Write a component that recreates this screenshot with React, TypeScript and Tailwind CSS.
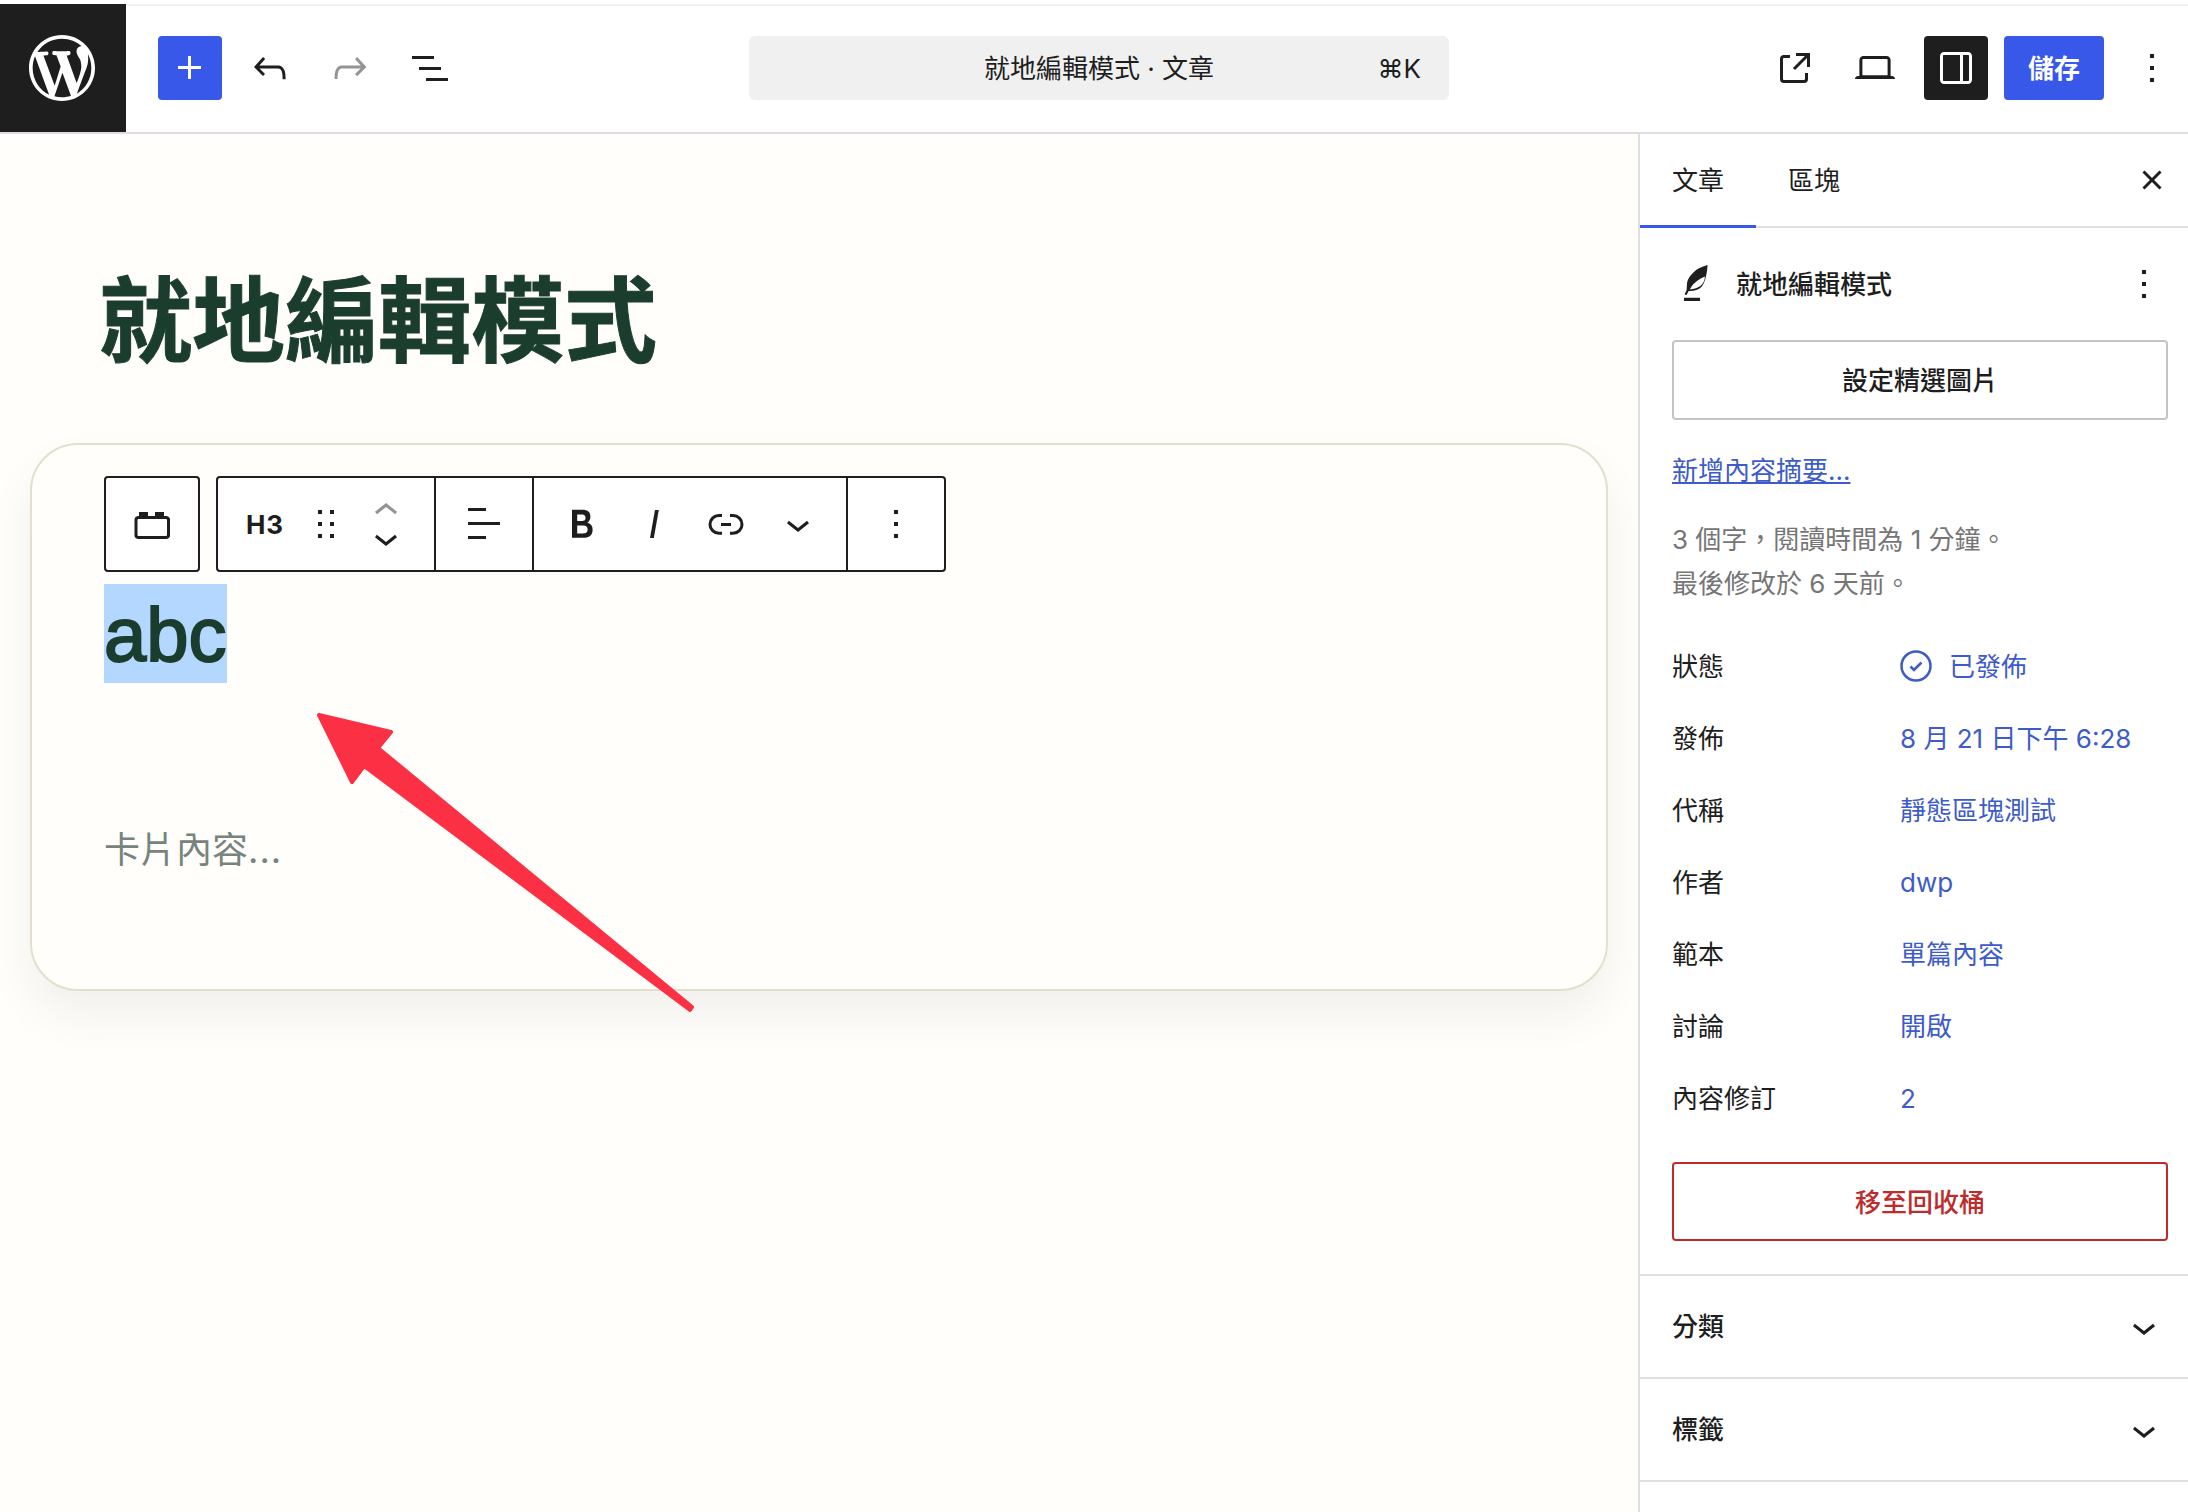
const fontStack = "font-['Inter','Noto_Sans_CJK_TC',sans-serif]";

const Icon = ({ d, size = 48, className = "" }: { d: string; size?: number; className?: string }) => (
  <svg width={size} height={size} viewBox="0 0 24 24" fill="currentColor" className={`shrink-0 ${className}`}>
    <path d={d} fillRule="evenodd" clipRule="evenodd" />
  </svg>
);

const paths = {
  plus: "M11 12.5V17.5H12.5V12.5H17.5V11H12.5V6H11V11H6V12.5H11Z",
  undo: "M18.3 11.7c-.6-.6-1.4-.9-2.3-.9H6.7l2.9-3.3-1.1-1-4.5 5L8.5 16l1-1-2.7-2.7H16c.5 0 .9.2 1.3.5 1 1 1 3.4 1 4.5v.3h1.5v-.2c0-1.5 0-4.3-1.5-5.7z",
  redo: "M15.6 6.5l-1.1 1 2.9 3.3H8c-.9 0-1.7.3-2.3.9-1.4 1.5-1.4 4.2-1.4 5.6v.2h1.5v-.3c0-1.1 0-3.5 1-4.5.3-.3.7-.5 1.3-.5h9.2L14.5 15l1.1 1.1 4.6-4.6-4.6-5z",
  listView: "M3 6h11v1.5H3V6Zm3.5 5.5h11V13h-11v-1.5ZM21 17H10v1.5h11V17Z",
  external: "M19.5 4.5h-7V6h4.44l-5.97 5.97 1.06 1.06L18 7.06v4.44h1.5v-7Zm-13 1a2 2 0 0 0-2 2v10a2 2 0 0 0 2 2h10a2 2 0 0 0 2-2v-3H17v3a.5.5 0 0 1-.5.5h-10a.5.5 0 0 1-.5-.5v-10a.5.5 0 0 1 .5-.5h3V5.5h-3Z",
  laptop: "M20.5 16h-.7V8c0-1.1-.9-2-2-2H6.2c-1.1 0-2 .9-2 2v8h-.7c-.8 0-1.5.7-1.5 1.5h20c0-.8-.7-1.5-1.5-1.5zM5.7 8c0-.3.2-.5.5-.5h11.6c.3 0 .5.2.5.5v7.600H5.700V8z",
  drawer: "M18 4H6c-1.1 0-2 .9-2 2v12c0 1.1.9 2 2 2h12c1.1 0 2-.9 2-2V6c0-1.1-.9-2-2-2zm-4 14.5H6c-.3 0-.5-.2-.5-.5V6c0-.3.2-.5.5-.5h8v13zm4.5-.5c0 .3-.2.5-.5.5h-2.5v-13H18c.3 0 .5.2.5.5v12z",
  more: "M13 19h-2v-2h2v2zm0-6h-2v-2h2v2zm0-6h-2V5h2v2z",
  close: "M12 13.06l3.712 3.713 1.061-1.06L13.061 12l3.712-3.712-1.06-1.06L12 10.938 8.288 7.227l-1.061 1.06L10.939 12l-3.712 3.712 1.06 1.061L12 13.061z",
  chevronDown: "M17.5 11.6L12 16l-5.5-4.4.9-1.2L12 14l4.5-3.6 1 1.2z",
  chevronUp: "M6.5 12.4L12 8l5.5 4.4-.9 1.2L12 10l-4.5 3.6-1-1.2z",
  drag: "M8 7h2V5H8v2zm0 6h2v-2H8v2zm0 6h2v-2H8v2zm6-14v2h2V5h-2zm0 8h2v-2h-2v2zm0 6h2v-2h-2v2z",
  align: "M13 5.5H4V4h9v1.5Zm7 7H4V11h16v1.5Zm-7 7H4V18h9v1.5Z",
  bold: "M14.7 11.3c1-.6 1.5-1.6 1.5-3 0-2.3-1.3-3.4-4-3.4H7v14h5.8c1.4 0 2.5-.3 3.3-1 .8-.7 1.2-1.7 1.2-2.9.1-1.9-.8-3.1-2.6-3.7zm-5.1-4h2.3c.6 0 1.1.1 1.4.4.3.3.5.7.5 1.2s-.2 1-.5 1.2c-.3.3-.8.4-1.4.4H9.6V7.3zm4.6 9c-.4.3-1 .4-1.7.4H9.6v-3.9h2.9c.7 0 1.3.2 1.7.5.4.3.6.8.6 1.5s-.2 1.2-.6 1.5z",
  italic: "M12.5 5L10 19h1.9l2.5-14z",
  link: "M10 17.389H8.444A5.194 5.194 0 1 1 8.444 7H10v1.5H8.444a3.694 3.694 0 0 0 0 7.389H10v1.5ZM14 7h1.556a5.194 5.194 0 0 1 0 10.39H14v-1.5h1.556a3.694 3.694 0 0 0 0-7.39H14V7Zm-4.5 6h5v-1.5h-5V13Z",
  card: "M5.500 8V6H10v2h3.500V6H18v2h1c1.100 0 2 .7 2 1.750v8c0 1.100-.9 1.750-2 1.750H5.250c-1.100 0-2-.7-2-1.750v-8C3.250 8.700 4.150 8 5.250 8h.25Zm-.25 1.500a.5.5 0 0 0-.5.5v7.500a.5.5 0 0 0 .5.5H19a.5.5 0 0 0 .5-.5V10a.5.5 0 0 0-.5-.5H5.250Z",
  feather: "M18.300 2.500C15 3.500 13 4.500 12 5.500 9.800 7.500 8.200 9.500 8 11.800L7.800 15 6.800 17.200l1 .3 1-2c2.200.2 5-.5 6.400-2C17 11.500 18 7 18.300 2.500ZM9.500 14.700c1-2.200 3.500-4.900 7.500-6.400-.2 2.200-1 3.500-2 4.500-1.500 1.200-3.500 1.700-5.500 1.900ZM6.500 18.900h8v1.600h-8v-1.600Z",
  wordpress: "M20 10c0-5.510-4.490-10-10-10C4.480 0 0 4.490 0 10c0 5.520 4.480 10 10 10 5.510 0 10-4.480 10-10zM7.780 15.370L4.370 6.220c.55-.02 1.170-.08 1.170-.08.5-.06.44-1.130-.06-1.110 0 0-1.450.11-2.370.11-.18 0-.37 0-.58-.01C4.120 2.690 6.870 1.110 10 1.110c2.330 0 4.450.87 6.050 2.340-.68-.11-1.650.39-1.650 1.580 0 .74.45 1.360.9 2.100.35.610.55 1.360.55 2.460 0 1.490-1.400 5-1.400 5l-3.030-8.370c.54-.02.82-.17.82-.17.5-.05.44-1.250-.06-1.220 0 0-1.440.12-2.380.12-.87 0-2.330-.12-2.330-.12-.5-.03-.56 1.200-.06 1.220l.92.08 1.260 3.410zM17.410 10c.24-.64.74-1.870.43-4.250.7 1.290 1.050 2.710 1.050 4.250 0 3.290-1.730 6.240-4.400 7.780.97-2.590 1.940-5.200 2.920-7.780zM6.100 18.090C3.120 16.650 1.110 13.530 1.110 10c0-1.300.23-2.480.72-3.590C3.250 10.300 4.670 14.200 6.100 18.090zm4.030-6.630l2.580 6.980c-.86.29-1.760.45-2.710.45-.79 0-1.570-.11-2.290-.33.81-2.380 1.620-4.740 2.420-7.100z",
};

const rows = [
  ["發佈", "8 月 21 日下午 6:28"],
  ["代稱", "靜態區塊測試"],
  ["作者", "dwp"],
  ["範本", "單篇內容"],
  ["討論", "開啟"],
  ["內容修訂", "2"],
];

const Header = () => (
  <div className="flex h-[134px] shrink-0 border-b-2 border-[#dedede] bg-white pt-[4px]">
    <div className="flex h-[128px] w-[126px] shrink-0 items-center justify-center bg-[#1e1e1e] pr-[2px] text-white">
      <svg width="66" height="66" viewBox="0 0 20 20" fill="currentColor">
        <path d={paths.wordpress} />
      </svg>
    </div>
    <div className="flex flex-1 items-center border-t-2 border-[#f0f0f0] pb-[2px]">
      <button className="ml-[32px] flex h-[64px] w-[64px] items-center justify-center rounded-[4px] bg-[#3858e9] text-white">
        <Icon d={paths.plus} />
      </button>
      <Icon d={paths.undo} className="ml-[24px] text-[#1e1e1e]" />
      <Icon d={paths.redo} className="ml-[32px] text-[#949494]" />
      <Icon d={paths.listView} className="ml-[32px] text-[#1e1e1e]" />
      <div className="ml-[295px] grid h-[64px] w-[700px] grid-cols-[1fr_auto_1fr] items-center rounded-[6px] bg-[#f0f0f0] px-[28px] text-[26px] text-[#1e1e1e]">
        <span />
        <span>就地編輯模式 · 文章</span>
        <span className="text-right">⌘K</span>
      </div>
      <div className="ml-auto flex items-center pr-[12px]">
        <Icon d={paths.external} className="text-[#1e1e1e]" />
        <Icon d={paths.laptop} className="ml-[32px] text-[#1e1e1e]" />
        <button className="ml-[25px] flex h-[64px] w-[64px] items-center justify-center rounded-[4px] bg-[#1e1e1e] text-white">
          <Icon d={paths.drawer} />
        </button>
        <button className="ml-[16px] h-[64px] w-[100px] rounded-[4px] bg-[#3858e9] text-[26px] font-bold text-white">儲存</button>
        <Icon d={paths.more} className="ml-[24px] text-[#1e1e1e]" />
      </div>
    </div>
  </div>
);

const BlockToolbar = () => (
  <div className="flex h-[96px] items-stretch text-[#1e1e1e]">
    <div className="flex w-[96px] items-center justify-center rounded-[4px] border-2 border-[#1e1e1e] bg-white">
      <Icon d={paths.card} />
    </div>
    <div className="ml-[16px] flex w-[730px] rounded-[4px] border-2 border-[#1e1e1e] bg-white">
      <div className="flex w-[218px] items-center border-r-2 border-[#1e1e1e]">
        <span className="w-[84px] pl-[10px] text-center text-[26px] font-bold tracking-[1px]">H3</span>
        <Icon d={paths.drag} />
        <div className="ml-[12px] flex flex-col">
          <div className="flex h-[27px] items-center"><Icon d={paths.chevronUp} className="text-[#949494]" /></div>
          <div className="flex h-[27px] items-center"><Icon d={paths.chevronDown} /></div>
        </div>
      </div>
      <div className="flex w-[98px] items-center justify-center border-r-2 border-[#1e1e1e]">
        <Icon d={paths.align} />
      </div>
      <div className="flex w-[314px] items-center justify-center border-r-2 border-[#1e1e1e]">
        {[paths.bold, paths.italic, paths.link, paths.chevronDown].map((d) => (
          <div key={d} className="flex w-[72px] justify-center"><Icon d={d} /></div>
        ))}
      </div>
      <div className="flex flex-1 items-center justify-center">
        <Icon d={paths.more} />
      </div>
    </div>
  </div>
);

const Editor = () => (
  <div className="relative min-w-0 flex-1 overflow-hidden bg-[#fffefa]">
    <h1 className="pl-[99px] pt-[132px] text-[93px] font-bold leading-[110px] text-[#1b3d2d] [-webkit-text-stroke:1px_#1b3d2d]">就地編輯模式</h1>
    <div className="ml-[30px] mt-[67px] h-[548px] w-[1578px] rounded-[48px] border-2 border-[#e3dfcc] bg-[#fffefa] px-[72px] pt-[31px] shadow-[0_24px_48px_rgba(0,0,0,0.06)]">
      <BlockToolbar />
      <div className="mt-[12px]">
        <span className="inline-block h-[99px] bg-[#b3d7fe] font-['Liberation_Sans',sans-serif] text-[76px] leading-[102px] text-[#1b3d2d] [-webkit-text-stroke:2px_#1b3d2d]">abc</span>
      </div>
      <p className="mt-[142px] text-[36px] leading-[50px] text-[#75847c]">
        卡片內容<span className="tracking-[1px]">...</span>
      </p>
    </div>
    <svg className="absolute left-0 top-0" width="800" height="1100" viewBox="0 134 800 1100">
      <path
        d="M319 715 L391 732 L378 748 L692 1007 L690 1010 L364 766 L352 782 Z"
        fill="#fc3044"
        stroke="#fc3044"
        strokeWidth="4"
        strokeLinejoin="round"
      />
    </svg>
  </div>
);

const Sidebar = () => (
  <div className="w-[550px] shrink-0 overflow-hidden border-l-2 border-[#e0e0e0] bg-white text-[26px] text-[#1e1e1e]">
    <div className="flex h-[94px] items-center border-b-2 border-[#e0e0e0]">
      <div className="relative flex h-[92px] w-[116px] items-center justify-center">
        文章
        <div className="absolute bottom-[-2px] left-0 h-[3px] w-full bg-[#3858e9]" />
      </div>
      <div className="flex h-[92px] w-[116px] items-center justify-center">區塊</div>
      <Icon d={paths.close} className="ml-auto mr-[12px]" />
    </div>
    <div className="pl-[32px] pr-[20px]">
      <div className="mt-[32px] flex h-[48px] items-center font-medium">
        <Icon d={paths.feather} className="-ml-[1px]" />
        <span className="ml-[17px]">就地編輯模式</span>
        <Icon d={paths.more} className="ml-auto" />
      </div>
      <button className="mt-[32px] h-[80px] w-full rounded-[4px] border-2 border-[#c4c4c4] font-medium">設定精選圖片</button>
      <a className="mt-[33px] block leading-[36px] text-[#3d5bc9] underline">新增內容摘要...</a>
      <div className="mt-[29px] leading-[44px] text-[#757575]">
        <p>3 個字，閱讀時間為 1 分鐘。</p>
        <p>最後修改於 6 天前。</p>
      </div>
      <div className="mt-[24px]">
        <div className="flex h-[72px] items-center">
          <span className="w-[228px]">狀態</span>
          <svg width="32" height="32" viewBox="0 0 32 32" fill="none" className="shrink-0 text-[#3d5bc9]" stroke="currentColor">
            <circle cx="16" cy="16" r="14.500" strokeWidth="2.500" />
            <path d="M10.500 16.500l3.500 3.500L21.500 12.500" strokeWidth="2.500" />
          </svg>
          <span className="ml-[17px] text-[#3d5bc9]">已發佈</span>
        </div>
        {rows.map(([label, value]) => (
          <div key={label} className="flex h-[72px] items-center">
            <span className="w-[228px]">{label}</span>
            <span className="text-[#3d5bc9]">{value}</span>
          </div>
        ))}
      </div>
      <button className="mt-[28px] h-[79px] w-full rounded-[4px] border-2 border-[#bd2b2b] pt-[2px] font-medium text-[#bd2b2b]">移至回收桶</button>
    </div>
    <div className="mt-[33px] border-t-2 border-[#e0e0e0]">
      {["分類", "標籤"].map((label) => (
        <div key={label} className="flex h-[103px] items-center border-b-2 border-[#e0e0e0] pl-[32px] pr-[20px] font-medium">
          {label}
          <Icon d={paths.chevronDown} className="ml-auto" />
        </div>
      ))}
    </div>
  </div>
);

export default function App() {
  return (
    <div lang="zh-TW" className={`flex h-[1512px] w-[2188px] flex-col overflow-hidden bg-white ${fontStack}`}>
      <Header />
      <div className="flex min-h-0 flex-1">
        <Editor />
        <Sidebar />
      </div>
    </div>
  );
}
